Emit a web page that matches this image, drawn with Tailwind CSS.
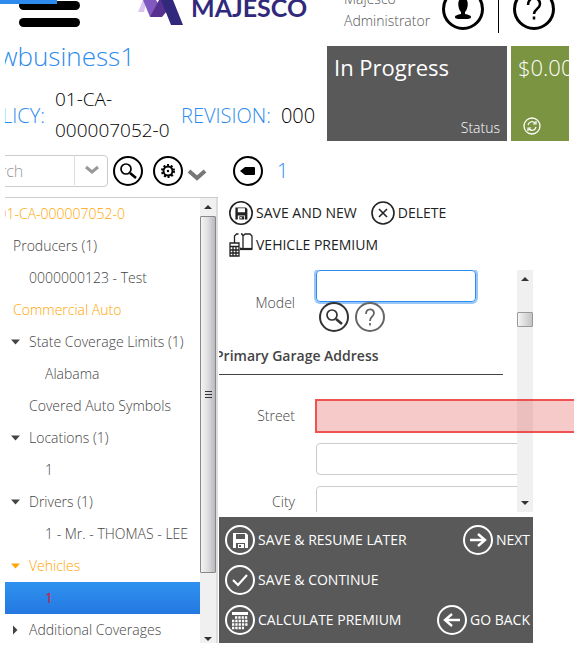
<!DOCTYPE html>
<html lang="en">
<head>
<meta charset="utf-8">
<title>Policy vehicle</title>
<script src="https://cdn.jsdelivr.net/npm/@tailwindcss/browser@4"></script>
</head>
<body class="min-h-screen overflow-hidden bg-white font-['Open_Sans','Noto_Sans',sans-serif] text-sm font-light text-[#444]">
<svg class="hidden" aria-hidden="true">
  <symbol id="search" viewBox="0 0 32 32"><g fill="none" stroke="currentColor"><circle cx="16" cy="16" r="14" stroke-width="2"/><circle cx="14" cy="14" r="5" stroke-width="1.7"/><path d="M18 18l6 5" stroke-width="2.6"/></g></symbol>
  <symbol id="help" viewBox="0 0 32 32"><g fill="none" stroke="currentColor" stroke-width="2"><circle cx="16" cy="16" r="14"/><path d="M12 13c0-6 8-6 8-1 0 4-4 3-4 8m0 2v2.5" stroke-width="1.8"/></g></symbol>
  <symbol id="disk" viewBox="0 0 32 32"><circle cx="16" cy="16" r="14" fill="none" stroke="currentColor" stroke-width="2"/><path fill="currentColor" fill-rule="evenodd" d="M9 9h13l2 2v13H9zM12 10v5h9v-5zM12 19v5h2v-4h6v4h1v-5zM15 21h2v2h-2z"/></symbol>
</svg>

<header class="relative flex h-[46px] items-start justify-between overflow-hidden pr-[19px]">
  <div class="absolute top-0 left-0 h-1 w-[57px] bg-[#2e8bee]"></div>
  <button aria-label="Menu" class="ml-[19px] flex w-[61px] flex-col gap-2 pt-px"><span class="h-[9px] w-full rounded-full bg-black"></span><span class="h-[9px] w-full rounded-full bg-black"></span></button>
  <svg class="ml-[53px] h-7 w-[176px] shrink-0" viewBox="0 0 176 28" role="img" aria-label="Majesco">
    <path d="M5 12L10 0h4l-3 12z" fill="#d9c5ef"/><path d="M10 0h13l5 8-11 9z" fill="#8059c0"/><path d="M17 17l9-17h4l4 11-5 6z" fill="#56318f"/><path d="M28 0h12l10 25H38z" fill="#31297b"/>
    <text x="58" y="17" fill="#31297b" font-family="Lato, sans-serif" font-weight="700" font-size="25">MAJESCO</text>
  </svg>
  <div class="-mt-3 ml-[35px] w-[91px] leading-[22px] text-[#555]">Majesco Administrator</div>
  <button aria-label="Account" class="-mt-3 ml-[7px]"><svg class="size-[42px]" viewBox="0 0 42 42"><circle cx="21" cy="21" r="19.5" fill="none" stroke="#000" stroke-width="3"/><path d="M21 10c7 0 5 11 2 14v2c3 1 6 1 6 3s-3 2-8 2-8 0-8-2 3-2 6-3v-2c-3-3-5-14 2-14z"/></svg></button>
  <div class="ml-[14px] h-[33px] w-px bg-black"></div>
  <button aria-label="Help" class="-mt-3 ml-[14px]"><svg class="size-[42px]" viewBox="0 0 42 42" fill="none" stroke="#000"><circle cx="21" cy="21" r="19.5" stroke-width="3"/><path d="M15 17c0-9 12-9 12-1 0 5-6 5-6 10m0 2.5v3" stroke-width="2.5"/></svg></button>
</header>

<section class="ml-[5px] flex h-[95px] pr-[5px]">
  <div class="w-[316px] shrink-0">
    <h1 class="flex h-[22px] w-[130px] items-center justify-end text-[26px] [clip-path:inset(-10px_0_-10px_0)] text-[#2e8bee]">newbusiness1</h1>
    <div class="mt-4 flex items-center text-xl leading-[31px] text-black">
      <div class="flex w-10 justify-end overflow-hidden text-[#2e8bee]">POLICY:</div>
      <div class="ml-[10px] w-[126px] text-[19px]">01-CA-<br>000007052-0</div>
      <div class="text-[#2e8bee]">REVISION:</div>
      <div class="ml-[10px]">000</div>
    </div>
  </div>
  <div class="flex min-w-0 flex-1 gap-1 pl-[6px]">
    <div class="flex w-[180px] shrink-0 flex-col justify-between bg-[#595959] px-[7px] pt-[5px] pb-1 font-normal text-white"><div class="text-[22px] leading-[32px]">In Progress</div><div class="text-right font-light leading-[18px]">Status</div></div>
    <div class="flex min-w-0 flex-1 flex-col justify-between overflow-hidden bg-[#7a9441] px-[7px] pt-[5px] pb-[6px] text-white"><div class="text-[22px] leading-[32px]">$0.00</div>
      <button aria-label="Refresh" class="ml-[5px] w-[18px]"><svg class="size-[18px]" viewBox="0 0 18 18" fill="none" stroke="#fff"><circle cx="9" cy="9" r="8" stroke-width="1.3"/><path d="M5 8c1-4 5-4 7-2m1-2v3h-3m3 3c-1 4-5 4-7 2m-1 2v-3h3" stroke-width="1.2"/></svg></button></div>
  </div>
</section>

<div class="mt-[13px] ml-[5px] flex h-[34px] items-center">
  <div class="relative flex h-8 w-[103px] justify-end overflow-hidden">
    <input aria-label="Search" placeholder="Search" class="w-[135px] shrink-0 rounded border border-[#ccc] px-0 text-base font-light placeholder:text-[#999]">
    <button aria-label="Search options" class="absolute top-0 right-0 flex h-[30px] w-[34px] items-center justify-center border-l border-[#ddd]"><svg class="size-4" viewBox="0 0 16 16" fill="none" stroke="#999" stroke-width="3"><path d="M2 5l6 5 6-5"/></svg></button>
  </div>
  <button aria-label="Find" class="ml-1 text-black"><svg class="size-8"><use href="#search"/></svg></button>
  <button aria-label="Settings" class="ml-2"><svg class="size-8" viewBox="0 0 32 32" fill="none" stroke="#000"><circle cx="16" cy="16" r="14" stroke-width="2"/><circle cx="16" cy="16" r="4.5" stroke-width="2"/><circle cx="16" cy="16" r="6" stroke-width="2" stroke-dasharray="2 1.8"/><circle cx="16" cy="16" r="1.2" fill="#000" stroke="none"/></svg></button>
  <button aria-label="More" class="mt-2 ml-[3px]"><svg class="size-5" viewBox="0 0 20 20" fill="none" stroke="#777" stroke-width="4"><path d="M2 6l8 7 8-7"/></svg></button>
  <button aria-label="Back" class="ml-[25px]"><svg class="size-8" viewBox="0 0 32 32"><circle cx="16" cy="16" r="14" fill="none" stroke="#000" stroke-width="2"/><path d="M8 16l5-4h9q1 0 1 1v6q0 1-1 1h-9z"/></svg></button>
  <h2 class="ml-[13px] text-xl text-[#2e8bee]">1</h2>
</div>

<main class="ml-[5px] flex items-start pt-[9px]">
  <aside class="flex h-[446px] w-[213px] shrink-0 border-t border-[#ccc]">
    <nav class="min-w-0 flex-1 overflow-hidden leading-8 whitespace-nowrap [&_a]:flex [&_a]:h-8 [&_a]:items-center [&_svg]:mr-2 [&_svg]:size-[10px]">
      <div class="flex w-[120px] justify-end text-[#ffa500]"><a href="#">01-CA-000007052-0</a></div>
      <a href="#" class="pl-2">Producers (1)</a>
      <a href="#" class="pl-6">0000000123 - Test</a>
      <a href="#" class="pl-2 text-[#ffa500]">Commercial Auto</a>
      <a href="#" class="pl-[6px]"><svg viewBox="0 0 10 10" fill="currentColor"><path d="M0 2.5h9L4.500 7.500z"/></svg>State Coverage Limits (1)</a>
      <a href="#" class="pl-10">Alabama</a>
      <a href="#" class="pl-6">Covered Auto Symbols</a>
      <a href="#" class="pl-[6px]"><svg viewBox="0 0 10 10" fill="currentColor"><path d="M0 2.5h9L4.500 7.500z"/></svg>Locations (1)</a>
      <a href="#" class="pl-10">1</a>
      <a href="#" class="pl-[6px]"><svg viewBox="0 0 10 10" fill="currentColor"><path d="M0 2.5h9L4.500 7.500z"/></svg>Drivers (1)</a>
      <a href="#" class="pl-10">1 - Mr. - THOMAS - LEE</a>
      <a href="#" class="pl-[6px] text-[#ffa500]"><svg viewBox="0 0 10 10" fill="currentColor"><path d="M0 2.5h9L4.500 7.500z"/></svg>Vehicles</a>
      <a href="#" class="bg-linear-to-b from-[#3092f0] to-[#2378e0] pl-10 font-normal text-[#e0102c]">1</a>
      <a href="#" class="pl-[6px]"><svg viewBox="0 0 10 10" fill="currentColor"><path d="M2 .5v9L6.500 5z"/></svg>Additional Coverages</a>
    </nav>
    <div class="flex w-[18px] flex-col border-r-2 border-[#ddd] bg-[#f0f0f0]">
      <svg class="h-[18px] w-4" viewBox="0 0 16 18"><path d="M4 11l4-4 4 4z" fill="#333"/></svg>
      <div class="flex h-[357px] items-center justify-center rounded-[1px] border border-[#888] bg-linear-to-r from-[#f4f4f4] via-[#dedee0] to-[#b8b8be]"><div class="flex w-[7px] flex-col gap-[2px]"><i class="h-px bg-[#333]"></i><i class="h-px bg-[#333]"></i><i class="h-px bg-[#333]"></i></div></div>
      <svg class="mt-auto h-[10px] w-4" viewBox="0 0 16 10"><path d="M4 4h8l-4 4z" fill="#333"/></svg>
    </div>
  </aside>

  <section class="ml-px w-[314px]">
    <div class="flex h-[73px] flex-wrap content-start gap-x-[14px] pl-[10px] font-normal text-[#222] [&_button]:flex [&_button]:h-8 [&_button]:items-center [&_button]:gap-[3px] [&_svg]:size-6">
      <button><svg viewBox="1 1 30 30"><use href="#disk" width="32" height="32"/></svg>SAVE AND NEW</button>
      <button><svg viewBox="0 0 24 24" fill="none" stroke="currentColor" stroke-width="1.6"><circle cx="12" cy="12" r="11"/><path d="M8 8l8 8m0-8l-8 8"/></svg>DELETE</button>
      <button><svg viewBox="0 0 24 24" fill="none" stroke="currentColor" stroke-width="1.3"><path d="M5.500 10V3l2-2h2M12 1h1l1 2v13M14 16V3l2-2h5l2 2v13h-9l-3-1"/><path d="M11 16h12" stroke-width="2.2"/><path d="M1 10h9v13H1zM1 13.500h9M1 17h9M1 20h9M4 14v9M7 14v9"/></svg>VEHICLE PREMIUM</button>
    </div>
    <div class="relative h-[242px]">
      <div class="flex h-full">
        <form class="min-w-0 flex-1 overflow-hidden">
          <div class="flex">
            <label for="model" class="w-[76px] pt-[23px] text-right">Model</label>
            <div class="ml-[21px]">
              <input id="model" class="block h-8 w-40 rounded border border-[#2e8bee] px-2 shadow-[0_0_0_2px_#99c7f7]">
              <div class="-mt-px ml-[2px] flex gap-1 text-[#333]"><button type="button" aria-label="Look up model"><svg class="size-8"><use href="#search"/></svg></button><button type="button" aria-label="Model help" class="text-[#666]"><svg class="size-8"><use href="#help"/></svg></button></div>
            </div>
          </div>
          <h3 class="mr-[14px] flex h-[42px] items-center border-b border-[#444] pt-1 font-semibold whitespace-nowrap"><span class="-ml-1">Primary Garage Address</span></h3>
          <div class="mt-6 flex h-[33px] items-center"><label for="street" class="w-[76px] text-right">Street</label></div>
          <input aria-label="Street line 2" class="mt-[11px] ml-[97px] block h-8 w-[260px] rounded border border-[#ccc] px-2">
          <div class="mt-[11px] flex items-center"><label for="city" class="w-[76px] shrink-0 text-right">City</label><input id="city" class="ml-[21px] h-8 w-[260px] shrink-0 rounded border border-[#ccc] px-2"></div>
        </form>
        <div class="flex w-4 shrink-0 flex-col bg-[#f0f0f0]">
          <svg class="h-[18px] w-4" viewBox="0 0 16 18"><path d="M4 11l4-4 4 4z" fill="#333"/></svg>
          <div class="mt-6 h-[15px] rounded-[1px] border border-[#999] bg-linear-to-r from-[#f4f4f4] to-[#c4c4c8]"></div>
          <svg class="mt-auto h-[18px] w-4" viewBox="0 0 16 18"><path d="M4 7h8l-4 4z" fill="#333"/></svg>
        </div>
      </div>
      <input id="street" class="absolute top-[129px] left-24 h-[34px] w-[280px] border-2 border-[#e33]/80 bg-[#e33b3b]/27 px-2">
    </div>
    <footer class="mt-[5px] flex h-[126px] justify-between bg-[#595959] pt-[3px] pr-[3px] pl-[5px] text-white [&_button]:flex [&_button]:h-10 [&_button]:items-center [&_button]:gap-[2px] [&_button]:font-normal [&_svg]:size-8">
      <div>
        <button><svg><use href="#disk"/></svg>SAVE &amp; RESUME LATER</button>
        <button><svg viewBox="0 0 32 32" fill="none" stroke="currentColor"><circle cx="16" cy="16" r="14" stroke-width="2"/><path d="M9 16l5 5 9-10" stroke-width="2.2"/></svg>SAVE &amp; CONTINUE</button>
        <button><svg viewBox="0 0 32 32" fill="none" stroke="currentColor"><circle cx="16" cy="16" r="14" stroke-width="2"/><path d="M8 9.500h16" stroke-width="3"/><path d="M11 13.500h13M8 17h16M8 20.500h16M8 24h12" stroke-width="2.3" stroke-dasharray="2.3 1"/></svg>CALCULATE PREMIUM</button>
      </div>
      <div class="flex flex-col items-end justify-between pb-[3px]">
        <button><svg viewBox="0 0 32 32" fill="none" stroke="currentColor"><circle cx="16" cy="16" r="14" stroke-width="2"/><path d="M8 16h15m-7-6l7 6-7 6" stroke-width="2.4"/></svg>NEXT</button>
        <button><svg viewBox="0 0 32 32" fill="none" stroke="currentColor"><circle cx="16" cy="16" r="14" stroke-width="2"/><path d="M24 16H9m7-6l-7 6 7 6" stroke-width="2.4"/></svg>GO BACK</button>
      </div>
    </footer>
  </section>
</main>
</body>
</html>
